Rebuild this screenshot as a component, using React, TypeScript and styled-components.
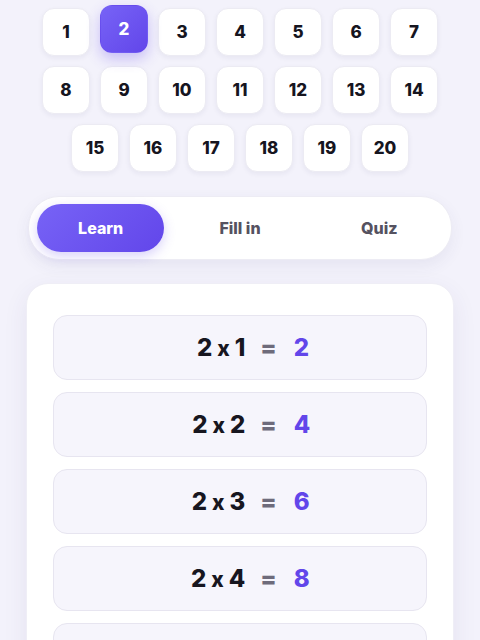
import React, { useState } from 'react'
import styled, { createGlobalStyle } from 'styled-components'

const GlobalStyle = createGlobalStyle`
  html, body {
    margin: 0;
    padding: 0;
    background: #f3f2fb;
    font-family: Inter, 'Open Sans', sans-serif;
  }
`

const Page = styled.div`
  display: flex;
  flex-direction: column;
  align-items: center;
  padding-top: 8px;
  min-height: 640px;
  background: #f3f2fb;
`

const NumberGrid = styled.div`
  width: 396px;
  display: flex;
  flex-wrap: wrap;
  justify-content: center;
  gap: 10px;
`

const NumberButton = styled.button<{ $active: boolean }>`
  width: 48px;
  height: 48px;
  border-radius: 12px;
  border: 1px solid ${(p) => (p.$active ? 'transparent' : '#ecebf3')};
  background: ${(p) =>
    p.$active ? 'linear-gradient(135deg, #7763f6, #6246ea)' : '#ffffff'};
  color: ${(p) => (p.$active ? '#ffffff' : '#16151f')};
  font-family: inherit;
  font-size: 17px;
  font-weight: 800;
  display: flex;
  align-items: center;
  justify-content: center;
  padding: 0;
  cursor: pointer;
  transform: ${(p) => (p.$active ? 'translateY(-3px)' : 'none')};
  box-shadow: ${(p) =>
    p.$active
      ? '0 6px 14px rgba(99, 71, 234, 0.3)'
      : '0 2px 5px rgba(40, 30, 90, 0.06)'};
`

const ModeToggle = styled.div`
  margin-top: 24px;
  width: 424px;
  box-sizing: border-box;
  padding: 7px 8px;
  display: grid;
  grid-template-columns: repeat(3, 1fr);
  gap: 12px;
  background: #ffffff;
  border: 1px solid #edecf4;
  border-radius: 31px;
  box-shadow: 0 6px 16px rgba(60, 50, 120, 0.07);
`

const ModeButton = styled.button<{ $active: boolean }>`
  height: 48px;
  border: none;
  border-radius: 24px;
  font-family: inherit;
  font-size: 16px;
  font-weight: 800;
  cursor: pointer;
  background: ${(p) =>
    p.$active ? 'linear-gradient(135deg, #7763f6, #6246ea)' : 'transparent'};
  color: ${(p) => (p.$active ? '#ffffff' : '#555260')};
  box-shadow: ${(p) => (p.$active ? '0 4px 12px rgba(99, 71, 234, 0.25)' : 'none')};
`

const Card = styled.div`
  margin-top: 23px;
  width: 428px;
  box-sizing: border-box;
  padding: 31px 26px;
  background: #ffffff;
  border-radius: 22px;
  border: 1px solid #efeef6;
  box-shadow: 0 8px 24px rgba(60, 50, 120, 0.08);
  display: flex;
  flex-direction: column;
  gap: 12px;
`

// expression column is right-aligned, result column left-aligned
const FactRow = styled.div`
  height: 65px;
  box-sizing: border-box;
  border-radius: 14px;
  background: #f6f5fc;
  border: 1px solid #e7e5f0;
  display: grid;
  grid-template-columns: 117px auto 60px;
  justify-content: center;
  align-items: center;
  column-gap: 15px;
  font-size: 24px;
  font-weight: 800;
`

const Expression = styled.span`
  color: #17161f;
  display: flex;
  justify-content: flex-end;
  align-items: baseline;
  gap: 5px;
`

const Times = styled.span`
  font-size: 21px;
`

const Equals = styled.span`
  color: #6e6b7b;
`

const Result = styled.span`
  color: #6246ea;
  margin-left: 2px;
`

const modes = ['Learn', 'Fill in', 'Quiz']

const App = () => {
  const [table, setTable] = useState(2)
  const [mode, setMode] = useState('Learn')

  const numbers = Array.from({ length: 20 }, (_, i) => i + 1)
  const facts = Array.from({ length: 10 }, (_, i) => i + 1)

  return (
    <Page>
      <GlobalStyle />
      <NumberGrid>
        {numbers.map((n) => (
          <NumberButton key={n} $active={n === table} onClick={() => setTable(n)}>
            {n}
          </NumberButton>
        ))}
      </NumberGrid>
      <ModeToggle>
        {modes.map((m) => (
          <ModeButton key={m} $active={m === mode} onClick={() => setMode(m)}>
            {m}
          </ModeButton>
        ))}
      </ModeToggle>
      <Card>
        {facts.map((f) => (
          <FactRow key={f}>
            <Expression>
              <span>{table}</span>
              <Times>x</Times>
              <span>{f}</span>
            </Expression>
            <Equals>=</Equals>
            <Result>{table * f}</Result>
          </FactRow>
        ))}
      </Card>
    </Page>
  )
}

export default App
